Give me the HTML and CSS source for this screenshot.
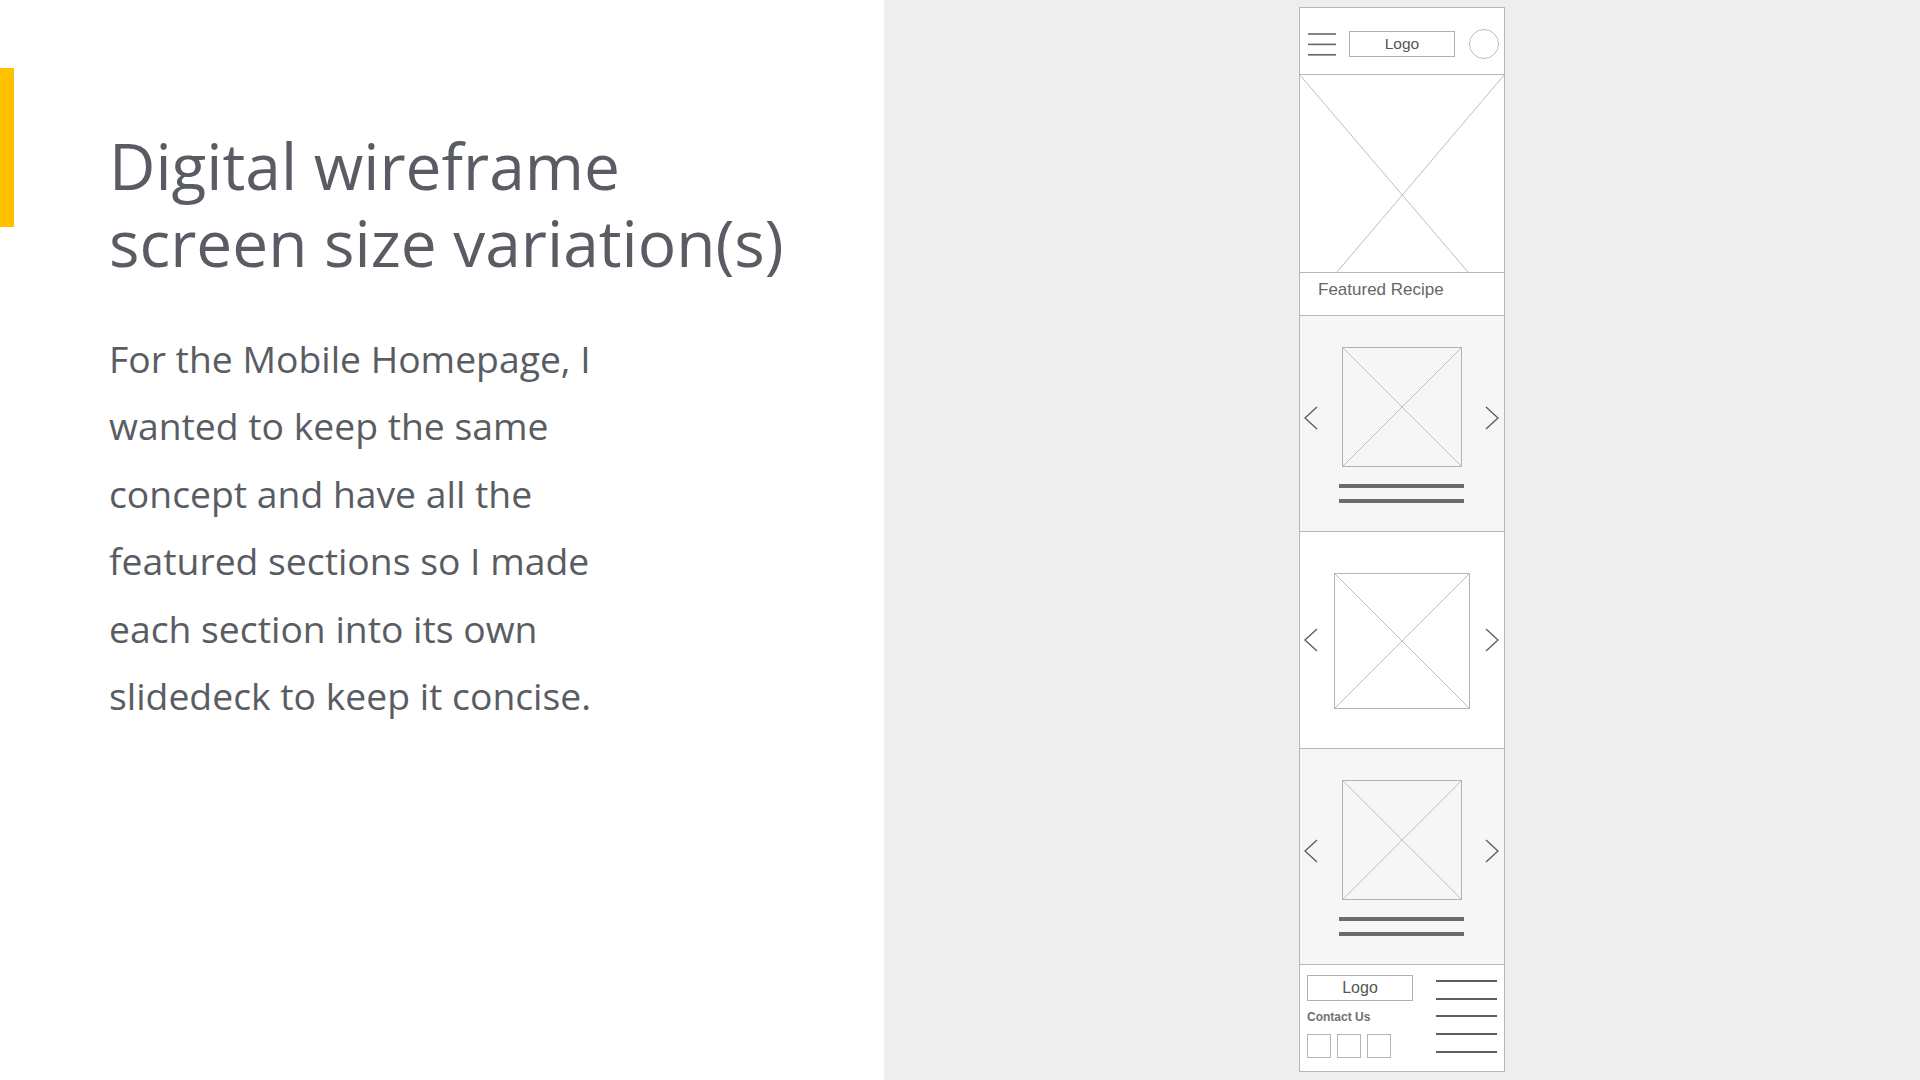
FILE: index.html
```html
<!DOCTYPE html>
<html lang="en">
<head>
<meta charset="utf-8">
<title>Digital wireframe screen size variation(s)</title>
<link rel="stylesheet" href="styles.css">
</head>
<body>
<div class="slide">
  <section class="left">
    <div class="accent"></div>
    <div class="copy">
      <h1 class="title">Digital wireframe<br>screen size variation(s)</h1>
      <p class="body">For the Mobile Homepage, I<br>wanted to keep the same<br>concept and have all the<br>featured sections so I made<br>each section into its own<br>slidedeck to keep it concise.</p>
    </div>
  </section>
  <section class="right">
    <div class="phone">
      <header class="ph-head">
        <svg class="burger" width="28" height="24" viewBox="0 0 28 24"><line x1="0" y1="2" x2="28" y2="2"/><line x1="0" y1="12.4" x2="28" y2="12.4"/><line x1="0" y1="22.8" x2="28" y2="22.8"/></svg>
        <div class="logo-box">Logo</div>
        <div class="avatar"></div>
      </header>
      <div class="hero">
        <svg width="204" height="197" viewBox="0 0 204 197"><line x1="-1" y1="-1" x2="168" y2="197"/><line x1="205" y1="-1" x2="37" y2="197"/></svg>
      </div>
      <div class="featured">Featured Recipe</div>

      <div class="carousel gray">
        <svg class="chev up" width="14" height="24" viewBox="0 0 14 24"><polyline points="13,1 1,12 13,23"/></svg>
        <div class="slot">
          <svg class="ph-img" width="120" height="120" viewBox="0 0 120 120"><rect x="0.5" y="0.5" width="119" height="119"/><line x1="0.5" y1="0.5" x2="119.5" y2="119.5"/><line x1="119.5" y1="0.5" x2="0.5" y2="119.5"/></svg>
          <div class="bar first"></div>
          <div class="bar"></div>
        </div>
        <svg class="chev up" width="14" height="24" viewBox="0 0 14 24"><polyline points="1,1 13,12 1,23"/></svg>
      </div>

      <div class="carousel white">
        <svg class="chev" width="14" height="24" viewBox="0 0 14 24"><polyline points="13,1 1,12 13,23"/></svg>
        <div class="slot">
          <svg class="ph-img" width="136" height="136" viewBox="0 0 136 136"><rect x="0.5" y="0.5" width="135" height="135"/><line x1="0.5" y1="0.5" x2="135.5" y2="135.5"/><line x1="135.5" y1="0.5" x2="0.5" y2="135.5"/></svg>
        </div>
        <svg class="chev" width="14" height="24" viewBox="0 0 14 24"><polyline points="1,1 13,12 1,23"/></svg>
      </div>

      <div class="carousel gray">
        <svg class="chev up" width="14" height="24" viewBox="0 0 14 24"><polyline points="13,1 1,12 13,23"/></svg>
        <div class="slot">
          <svg class="ph-img" width="120" height="120" viewBox="0 0 120 120"><rect x="0.5" y="0.5" width="119" height="119"/><line x1="0.5" y1="0.5" x2="119.5" y2="119.5"/><line x1="119.5" y1="0.5" x2="0.5" y2="119.5"/></svg>
          <div class="bar first"></div>
          <div class="bar"></div>
        </div>
        <svg class="chev up" width="14" height="24" viewBox="0 0 14 24"><polyline points="1,1 13,12 1,23"/></svg>
      </div>

      <footer class="ph-foot">
        <div class="foot-left">
          <div class="logo-box foot-logo">Logo</div>
          <div class="contact">Contact Us</div>
          <div class="socials"><span></span><span></span><span></span></div>
        </div>
        <div class="foot-links"><i></i><i></i><i></i><i></i><i></i></div>
      </footer>
    </div>
  </section>
</div>
</body>
</html>
```

FILE: styles.css
```css
html, body {
  margin: 0;
  padding: 0;
}
body {
  width: 1920px;
  height: 1080px;
  overflow: hidden;
  font-family: "Open Sans", "DejaVu Sans", sans-serif;
}
.slide {
  display: flex;
  width: 1920px;
  height: 1080px;
}

/* ---------- left text panel ---------- */
.left {
  width: 884px;
  background: #ffffff;
  display: flex;
  align-items: flex-start;
}
.accent {
  width: 14px;
  height: 159px;
  margin-top: 68px;
  background: #ffc000;
  flex: none;
}
.copy {
  margin-left: 92px;
  padding-top: 127px;
  color: #595d63;
}
.title {
  margin: 0 0 0 3px;
  font-weight: 400;
  font-size: 64px;
  line-height: 77px;
}
.body {
  margin: 44px 0 0 3px;
  font-size: 37.3px;
  line-height: 67.4px;
}

/* ---------- right wireframe panel ---------- */
.right {
  flex: 1;
  background: #eeeeee;
  padding: 7px 0 0 415px;
}
.phone {
  width: 204px;
  border: 1px solid #b7b7b7;
  background: #ffffff;
  font-family: "Liberation Sans", Arial, sans-serif;
}
.ph-head {
  height: 60px;
  padding: 6px 5px 0 8px;
  display: flex;
  align-items: center;
  border-bottom: 1px solid #b7b7b7;
}
.burger line {
  stroke: #666666;
  stroke-width: 1.6;
}
.burger {
  flex: none;
}
.logo-box {
  width: 104px;
  height: 24px;
  border: 1px solid #b0b0b0;
  color: #555555;
  font-size: 15.5px;
  line-height: 24px;
  text-align: center;
  margin-left: 13px;
}
.avatar {
  width: 28px;
  height: 28px;
  border: 1px solid #bdbdbd;
  border-radius: 50%;
  margin-left: 14px;
}
.hero {
  height: 197px;
  border-bottom: 1px solid #b7b7b7;
  overflow: hidden;
}
.hero svg {
  display: block;
}
.hero line {
  stroke: #bdbdbd;
  stroke-width: 1;
}
.featured {
  height: 42px;
  line-height: 34px;
  padding-left: 18px;
  font-size: 17px;
  color: #666666;
  border-bottom: 1px solid #b7b7b7;
}
.carousel {
  height: 215px;
  display: flex;
  align-items: center;
  justify-content: space-between;
  padding: 0 5px 0 4px;
  border-bottom: 1px solid #b7b7b7;
}
.carousel.white {
  height: 216px;
  background: #ffffff;
}
.carousel.gray {
  background: #f6f6f6;
}
.chev {
  flex: none;
}
.chev polyline {
  fill: none;
  stroke: #5a5a5a;
  stroke-width: 1.3;
}
.chev.up {
  margin-bottom: 11px;
}
.slot {
  display: flex;
  flex-direction: column;
  align-items: center;
  padding-top: 2px;
}
.ph-img {
  display: block;
}
.ph-img rect {
  fill: none;
  stroke: #b3b3b3;
  stroke-width: 1;
}
.ph-img line {
  stroke: #c0c0c0;
  stroke-width: 1;
}
.bar {
  width: 125px;
  height: 4px;
  background: #6b6b6b;
  margin-top: 11px;
}
.bar.first {
  margin-top: 17px;
}
.ph-foot {
  height: 106px;
  display: flex;
  justify-content: space-between;
  padding: 0 7px;
}
.foot-left {
  padding-top: 10px;
}
.foot-logo {
  margin-left: 0;
  font-size: 16px;
}
.contact {
  margin-top: 8px;
  font-size: 12px;
  line-height: 16px;
  font-weight: 700;
  color: #707070;
}
.socials {
  display: flex;
  gap: 6px;
  margin-top: 9px;
}
.socials span {
  width: 22px;
  height: 22px;
  border: 1px solid #b5b5b5;
}
.foot-links {
  width: 61px;
  padding-top: 15px;
  display: flex;
  flex-direction: column;
  gap: 15.7px;
}
.foot-links i {
  display: block;
  height: 2px;
  background: #5e5e5e;
}
```
